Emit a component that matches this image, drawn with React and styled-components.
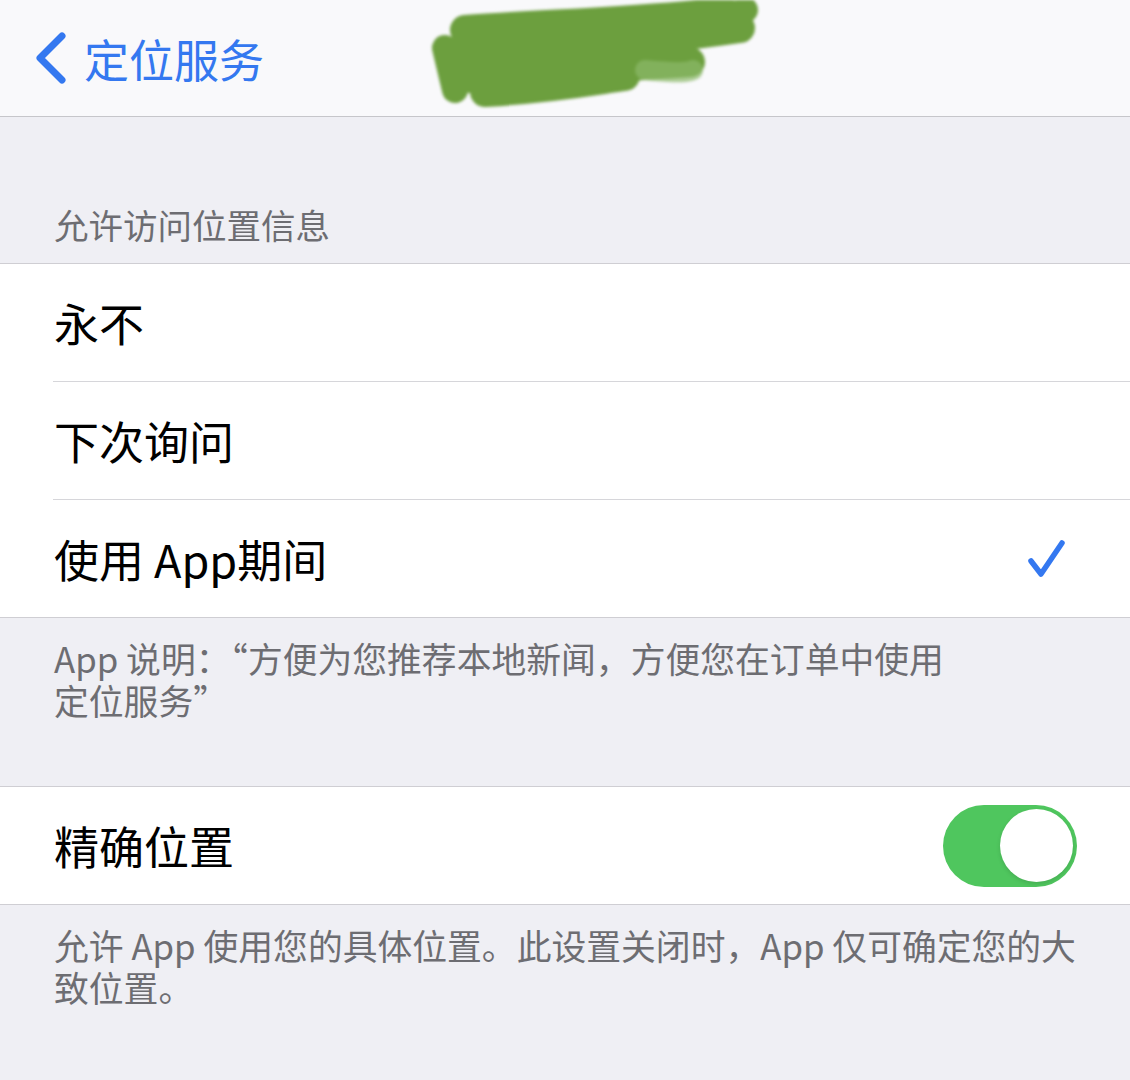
import React from "react";
import styled, { createGlobalStyle } from "styled-components";

const GlobalStyle = createGlobalStyle`
  html, body {
    margin: 0;
    padding: 0;
    background: #efeff4;
  }
  body {
    font-family: "Noto Sans CJK SC", "Noto Sans", sans-serif;
    -webkit-font-smoothing: antialiased;
  }
`;

const Screen = styled.div`
  width: 1130px;
  min-height: 1080px;
  background: #efeff4;
  overflow: hidden;
`;

const NavBar = styled.header`
  position: relative;
  height: 116px;
  background: #f9f9fb;
  border-bottom: 1px solid #c6c6ca;
  display: flex;
  align-items: center;
  padding-left: 34px;
  box-sizing: content-box;
`;

const BackButton = styled.div`
  display: flex;
  align-items: center;
  gap: 16px;
  color: #3478f0;
  font-size: 45px;
  line-height: 1;
`;

const Scribble = styled.svg`
  position: absolute;
  left: 425px;
  top: 0;
  width: 340px;
  height: 110px;
  filter: blur(1.5px);
`;

const SectionHeader = styled.div`
  height: 146px;
  display: flex;
  align-items: flex-end;
  padding: 0 0 18px 54px;
  box-sizing: border-box;
  color: #6d6d72;
  font-size: 34.5px;
  line-height: 42px;
`;

const Group = styled.section`
  background: #ffffff;
  border-top: 1px solid #cfced3;
  border-bottom: 1px solid #cfced3;
`;

const Row = styled.div`
  height: ${(p) => (p.$last ? 117 : 118)}px;
  box-sizing: border-box;
  margin-left: 53px;
  padding-right: 54px;
  display: flex;
  align-items: center;
  justify-content: space-between;
  border-bottom: ${(p) => (p.$last ? "none" : "1px solid #d6d6da")};
`;

const RowLabel = styled.span`
  color: #000;
  font-size: 45px;
  line-height: 1;
  padding-left: 1px;
`;

const Footnote = styled.div`
  padding: ${(p) => p.$pad};
  padding-left: 54px;
  padding-right: 40px;
  color: #6d6d72;
  font-size: 34.8px;
  line-height: 42px;
`;

const Check = styled.svg`
  width: 42px;
  height: 42px;
  margin-right: 8px;
`;

const Toggle = styled.div`
  width: 134px;
  height: 82px;
  border-radius: 41px;
  background: #4fc65e;
  display: flex;
  align-items: center;
  justify-content: flex-end;
  padding: 4px;
  box-sizing: border-box;
  margin-right: -1px;
`;

const Knob = styled.div`
  width: 73px;
  height: 73px;
  border-radius: 50%;
  background: #fff;
  box-shadow: 0 2px 4px rgba(0, 0, 0, 0.12);
`;

export default function App() {
  return (
    <Screen>
      <GlobalStyle />
      <NavBar>
        <BackButton>
          <svg width="34" height="52" viewBox="0 0 34 52">
            <path
              d="M28 4 L6 26 L28 48"
              fill="none"
              stroke="#3478f0"
              strokeWidth="7"
              strokeLinecap="round"
              strokeLinejoin="round"
            />
          </svg>
          <span>定位服务</span>
        </BackButton>
        <Scribble viewBox="0 0 340 110">
          <path
            d="M40 30 C120 24 220 22 300 12 M30 55 C110 50 220 42 315 28 M45 78 C130 72 200 66 265 62 M60 92 C130 88 170 80 200 76"
            fill="none"
            stroke="#6c9f3e"
            strokeWidth="30"
            strokeLinecap="round"
          />
          <path
            d="M20 48 L30 90 M300 20 L320 10"
            fill="none"
            stroke="#6c9f3e"
            strokeWidth="26"
            strokeLinecap="round"
          />
          <path
            d="M220 70 C240 72 260 74 268 70"
            fill="none"
            stroke="#8cb96a"
            strokeWidth="20"
            strokeLinecap="round"
            opacity="0.7"
          />
        </Scribble>
      </NavBar>

      <SectionHeader>允许访问位置信息</SectionHeader>

      <Group>
        <Row>
          <RowLabel>永不</RowLabel>
        </Row>
        <Row>
          <RowLabel>下次询问</RowLabel>
        </Row>
        <Row $last>
          <RowLabel>使用 App期间</RowLabel>
          <Check viewBox="0 0 42 42">
            <path
              d="M5 23 L15 36 L36 5"
              fill="none"
              stroke="#3478f0"
              strokeWidth="5.5"
              strokeLinecap="round"
              strokeLinejoin="round"
            />
          </Check>
        </Row>
      </Group>

      <Footnote $pad="19px 0 65px">
        App 说明：“方便为您推荐本地新闻，方便您在订单中使用
        <br />
        定位服务”
      </Footnote>

      <Group>
        <Row $last>
          <RowLabel>精确位置</RowLabel>
          <Toggle>
            <Knob />
          </Toggle>
        </Row>
      </Group>

      <Footnote $pad="19px 0 60px">
        允许 App 使用您的具体位置。此设置关闭时，App 仅可确定您的大
        <br />
        致位置。
      </Footnote>
    </Screen>
  );
}
